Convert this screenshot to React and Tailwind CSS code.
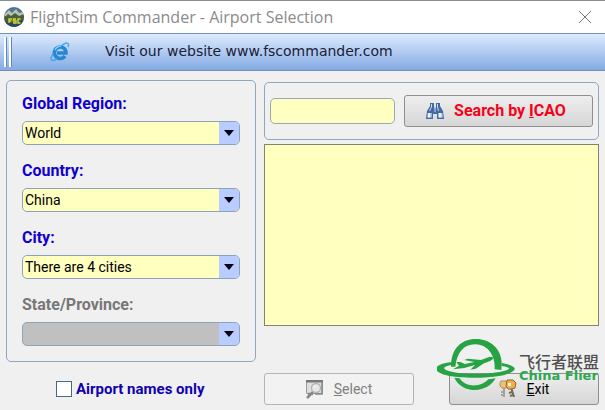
import React from 'react';

const FIELDS = [
    { id: 'region', label: 'Global Region:', value: 'World' },
    { id: 'country', label: 'Country:', value: 'China' },
    { id: 'city', label: 'City:', value: 'There are 4 cities' },
    { id: 'state', label: 'State/Province:', value: '', disabled: true },
];

function AppIcon() {
    return (
        <svg width="20" height="20" viewBox="0 0 20 20" className="shrink-0" aria-hidden="true">
            <defs>
                <clipPath id="globe"><circle cx="10" cy="10" r="10" /></clipPath>
            </defs>
            <g clipPath="url(#globe)">
                <rect width="20" height="20" fill="#4d7590" />
                <path d="M1 7 5 3l3 3 4-4 3 4 4-1v4H1z" fill="#b9c3b0" />
                <path d="M0 11 4 7l3 2 4-3 4 3 5-2v13H0z" fill="#4b5d3c" />
                <path d="M1 14q9 4 18-1v7H1z" fill="#28486b" />
            </g>
            <path d="M5 16v-4h3M5 14h2.500M12 12H9.500v2H12V16H9M16.500 12H14V16h2.500" fill="none" stroke="#d2db2e" strokeWidth="1.400" />
        </svg>
    );
}

function BrowserIcon() {
    return (
        <svg width="20" height="20" viewBox="0 0 20 20" className="shrink-0" aria-hidden="true">
            <path d="M15 14A5.800 5.800 0 1 1 16 11H7" fill="none" stroke="#2688d0" strokeWidth="3.600" />
            <path d="M5 8q2-4 6-4" fill="none" stroke="#7fd0f5" strokeWidth="1.500" />
            <path d="M3 12C-1 18 2 20 7 17M11 4C16 0 20 0 18 5" fill="none" stroke="#45a9e6" strokeWidth="1.500" />
        </svg>
    );
}

function BinocularsIcon() {
    return (
        <svg width="20" height="18" viewBox="0 0 20 18" className="shrink-0" aria-hidden="true">
            <path d="M5 1h4v3l.500 3h1L11 4V1h4v3l3 5 1 8h-7v-5H8v5H1l1-8 3-5z" fill="#4469a3" />
            <path d="M6 2h1v3L5 9H4l2-4zM12 2h1v3l1 4h-1l-1-4z" fill="#c8daf2" />
            <path d="M2.500 11H7v4.500H2zM13 11h4.500l.500 4.500h-5z" fill="#94b3de" />
            <path d="M3 11h2.500v4.500H3zM14 11h2.500v4.500H14z" fill="#eaf2fc" />
            <path d="M9 7h2v3H9z" fill="#86a6d0" />
        </svg>
    );
}

function SelectIcon() {
    return (
        <svg width="18" height="20" viewBox="0 0 18 20" className="shrink-0" aria-hidden="true">
            <path d="M.500 1.500h16v13H.500z" fill="#dedede" stroke="#9c9c9c" />
            <path d="M0 1h17v2.500H0z" fill="#777" />
            <path d="M16 2v13H9" fill="none" stroke="#888" strokeWidth="1.500" />
            <path d="M7 13 1 19M2 15h5" stroke="#858585" strokeWidth="2.500" />
            <circle cx="10" cy="9" r="4.500" fill="#e6e6e6" stroke="#b2b2b2" strokeWidth="1.300" />
            <path d="M8 9q0-2 2-2" fill="none" stroke="#fff" />
        </svg>
    );
}

function KeysIcon() {
    return (
        <svg width="18" height="20" viewBox="0 0 18 20" className="shrink-0" aria-hidden="true">
            <path d="M5 7v11M5 13H2M5 16H2" fill="none" stroke="#a9a09c" strokeWidth="2" />
            <path d="M2 2h5l2 2v3L7 9H3L1 7V4z" fill="#eec27c" stroke="#b98d5c" />
            <path d="m12 8 3 10M13 13l-3 1M14 16l-3 1" fill="none" stroke="#76685c" strokeWidth="2" />
            <path d="M8 1h6l3 3-1 5-3 1H9L7 7z" fill="#f0ae48" stroke="#8f6538" />
            <path d="M9 4h3v3H9z" fill="#fff3d5" />
        </svg>
    );
}

function FlierLogo() {
    return (
        <svg width="80" height="56" viewBox="24 84 240 168" className="shrink-0" fill="#27a343" aria-hidden="true">
            <path d="M66 170C66 115 98 87 140 87C185 87 218 118 218 160L217 180L197 178C200 140 178 103 138 103C104 103 84 128 79 170z" />
            <path d="M66 157C10 163 10 185 50 195C85 205 165 206 210 198C262 188 280 170 218 159L218 168C260 174 235 183 205 187C165 193 110 193 75 187C40 181 35 170 66 165z" />
            <path d="M76 203C88 228 112 240 138 240C165 240 188 226 200 205L178 208C160 230 112 236 92 205z" />
            <path d="M72 178L90 167L82 156L94 156L108 162L136 156L106 150L116 146L156 150L180 141Q192 138 193 145Q190 153 165 160L140 176L124 179L138 165L106 174z" />
        </svg>
    );
}

function SelectField({ id, label, value, disabled }) {
    return (
        <div className="flex flex-col gap-2">
            <label
                htmlFor={id}
                className={`text-[16px] leading-[18px] font-bold ${disabled ? 'text-[#777]' : 'text-[#1000d0]'}`}
            >
                {label}
            </label>
            <div className="relative">
                <select
                    id={id}
                    disabled={disabled}
                    className={`block h-6 w-full appearance-none rounded-[5px] border border-[#8fa3b8] pl-[2px] pr-6 text-[14px] leading-5 text-black opacity-100 ${disabled ? 'bg-[#c0c0c0]' : 'bg-[#ffffc0]'}`}
                >
                    <option>{value}</option>
                </select>
                {/* Drop-down arrow */}
                <span className="pointer-events-none absolute inset-y-px right-px flex w-5 items-center justify-center rounded-r bg-[#b9ccff]">
                    <svg width="10" height="6" viewBox="0 0 10 6" aria-hidden="true">
                        <path d="M0 0h10L5 6z" fill="#000010" />
                    </svg>
                </span>
            </div>
        </div>
    );
}

export default function App() {
    return (
        <div className="flex min-h-screen flex-col bg-[#f0f0f0] font-['Roboto','Liberation_Sans',sans-serif]">
            <header className="flex h-[33px] items-center gap-[6px] border-t border-[#8e8e8e] bg-white pl-1 pr-3">
                <AppIcon />
                <h1 className="flex-1 font-['Open_Sans',sans-serif] text-[16px] leading-5 text-[#8b8b8b]">
                    FlightSim Commander - Airport Selection
                </h1>
                <button type="button" aria-label="Close" className="flex size-4 items-center justify-center">
                    <svg width="14" height="14" viewBox="0 0 14 14" aria-hidden="true">
                        <path d="m1 1 12 12M13 1 1 13" stroke="#777" />
                    </svg>
                </button>
            </header>

            <nav className="flex h-[38px] items-center border-y border-[#7690bd] bg-linear-to-b from-[#deebfd] to-[#84aae3] pl-1">
                <div className="flex h-[30px] gap-[2px]">
                    <span className="w-[3px] border-r border-[#6486c4] bg-white" />
                    <span className="w-[3px] border-r border-[#6486c4] bg-white" />
                </div>
                <a href="#website" className="flex items-center gap-[35px] pl-[38px] font-['DejaVu_Sans',sans-serif] text-[14px] leading-5 text-[#1b2036]">
                    <BrowserIcon />
                    <span className="pb-[2px]">Visit our website www.fscommander.com</span>
                </a>
            </nav>

            <main className="grid grid-cols-[250fr_335fr] gap-x-2 px-[6px] pt-[9px]">
                <section className="flex flex-col gap-[17px] rounded-[5px] border border-[#8fa6c0] px-[15px] pt-[14px] pb-[15px]">
                    {FIELDS.map((field) => (
                        <SelectField key={field.id} {...field} />
                    ))}
                </section>

                <section className="flex flex-col gap-1 pt-[2px] pb-9">
                    <form className="grid grid-cols-[125fr_189fr] items-center gap-x-[9px] rounded-[5px] border border-[#8fa6c0] px-[5px] py-3">
                        <input
                            type="text"
                            aria-label="ICAO code"
                            className="h-[26px] w-full rounded-[5px] border border-[#98a8b4] bg-[#ffffc0] px-1 text-[14px]"
                        />
                        <button
                            type="button"
                            className="flex h-8 items-center justify-center gap-[9px] rounded-[3px] border border-[#8f8f8f] bg-linear-to-b from-[#eeeeee] to-[#d6d6d6] pr-[6px] text-[16px] font-bold whitespace-nowrap text-[#f80018]"
                        >
                            <BinocularsIcon />
                            <span>Search by <u>I</u>CAO</span>
                        </button>
                    </form>
                    <div role="listbox" aria-label="Airports" className="flex-1 border border-[#84846c] bg-[#ffffc0]" />
                </section>
            </main>

            <footer className="grid grid-cols-[250fr_335fr] gap-x-2 px-[6px] pt-[11px] pb-[5px]">
                <label className="flex items-center gap-1 pl-[50px] text-[15px] leading-[18px] font-bold text-[#1000b0]">
                    <input type="checkbox" className="size-4 appearance-none border border-[#48668c] bg-white" />
                    Airport names only
                </label>
                <div className="relative grid grid-cols-[150fr_150fr] gap-x-[35px]">
                    <button
                        type="button"
                        disabled
                        className="flex h-8 items-center justify-center gap-[10px] rounded-[3px] border border-[#b4b4b4] bg-[#f2f2f2] text-[14px] text-[#808080]"
                    >
                        <SelectIcon />
                        <span><u>S</u>elect</span>
                    </button>
                    <button
                        type="button"
                        className="flex h-8 items-center justify-center gap-[10px] rounded-[3px] border border-[#8f8f8f] bg-linear-to-b from-[#eeeeee] to-[#d6d6d6] text-[14px] leading-4 text-black"
                    >
                        <KeysIcon />
                        <span><u>E</u>xit</span>
                    </button>
                    {/* Watermark over the exit button */}
                    <div className="pointer-events-none absolute right-0 bottom-[11px] flex items-start gap-[2px]">
                        <FlierLogo />
                        <div className="w-20 overflow-hidden pt-[14px] whitespace-nowrap">
                            <p className="font-['Noto_Sans_CJK_SC',sans-serif] text-[16px] leading-[18px] font-medium text-[#505050]">飞行者联盟</p>
                            <p className="font-['DejaVu_Sans',sans-serif] text-[13px] leading-3 font-bold text-[#2fa84f]">China Flier</p>
                        </div>
                    </div>
                </div>
            </footer>
        </div>
    );
}
